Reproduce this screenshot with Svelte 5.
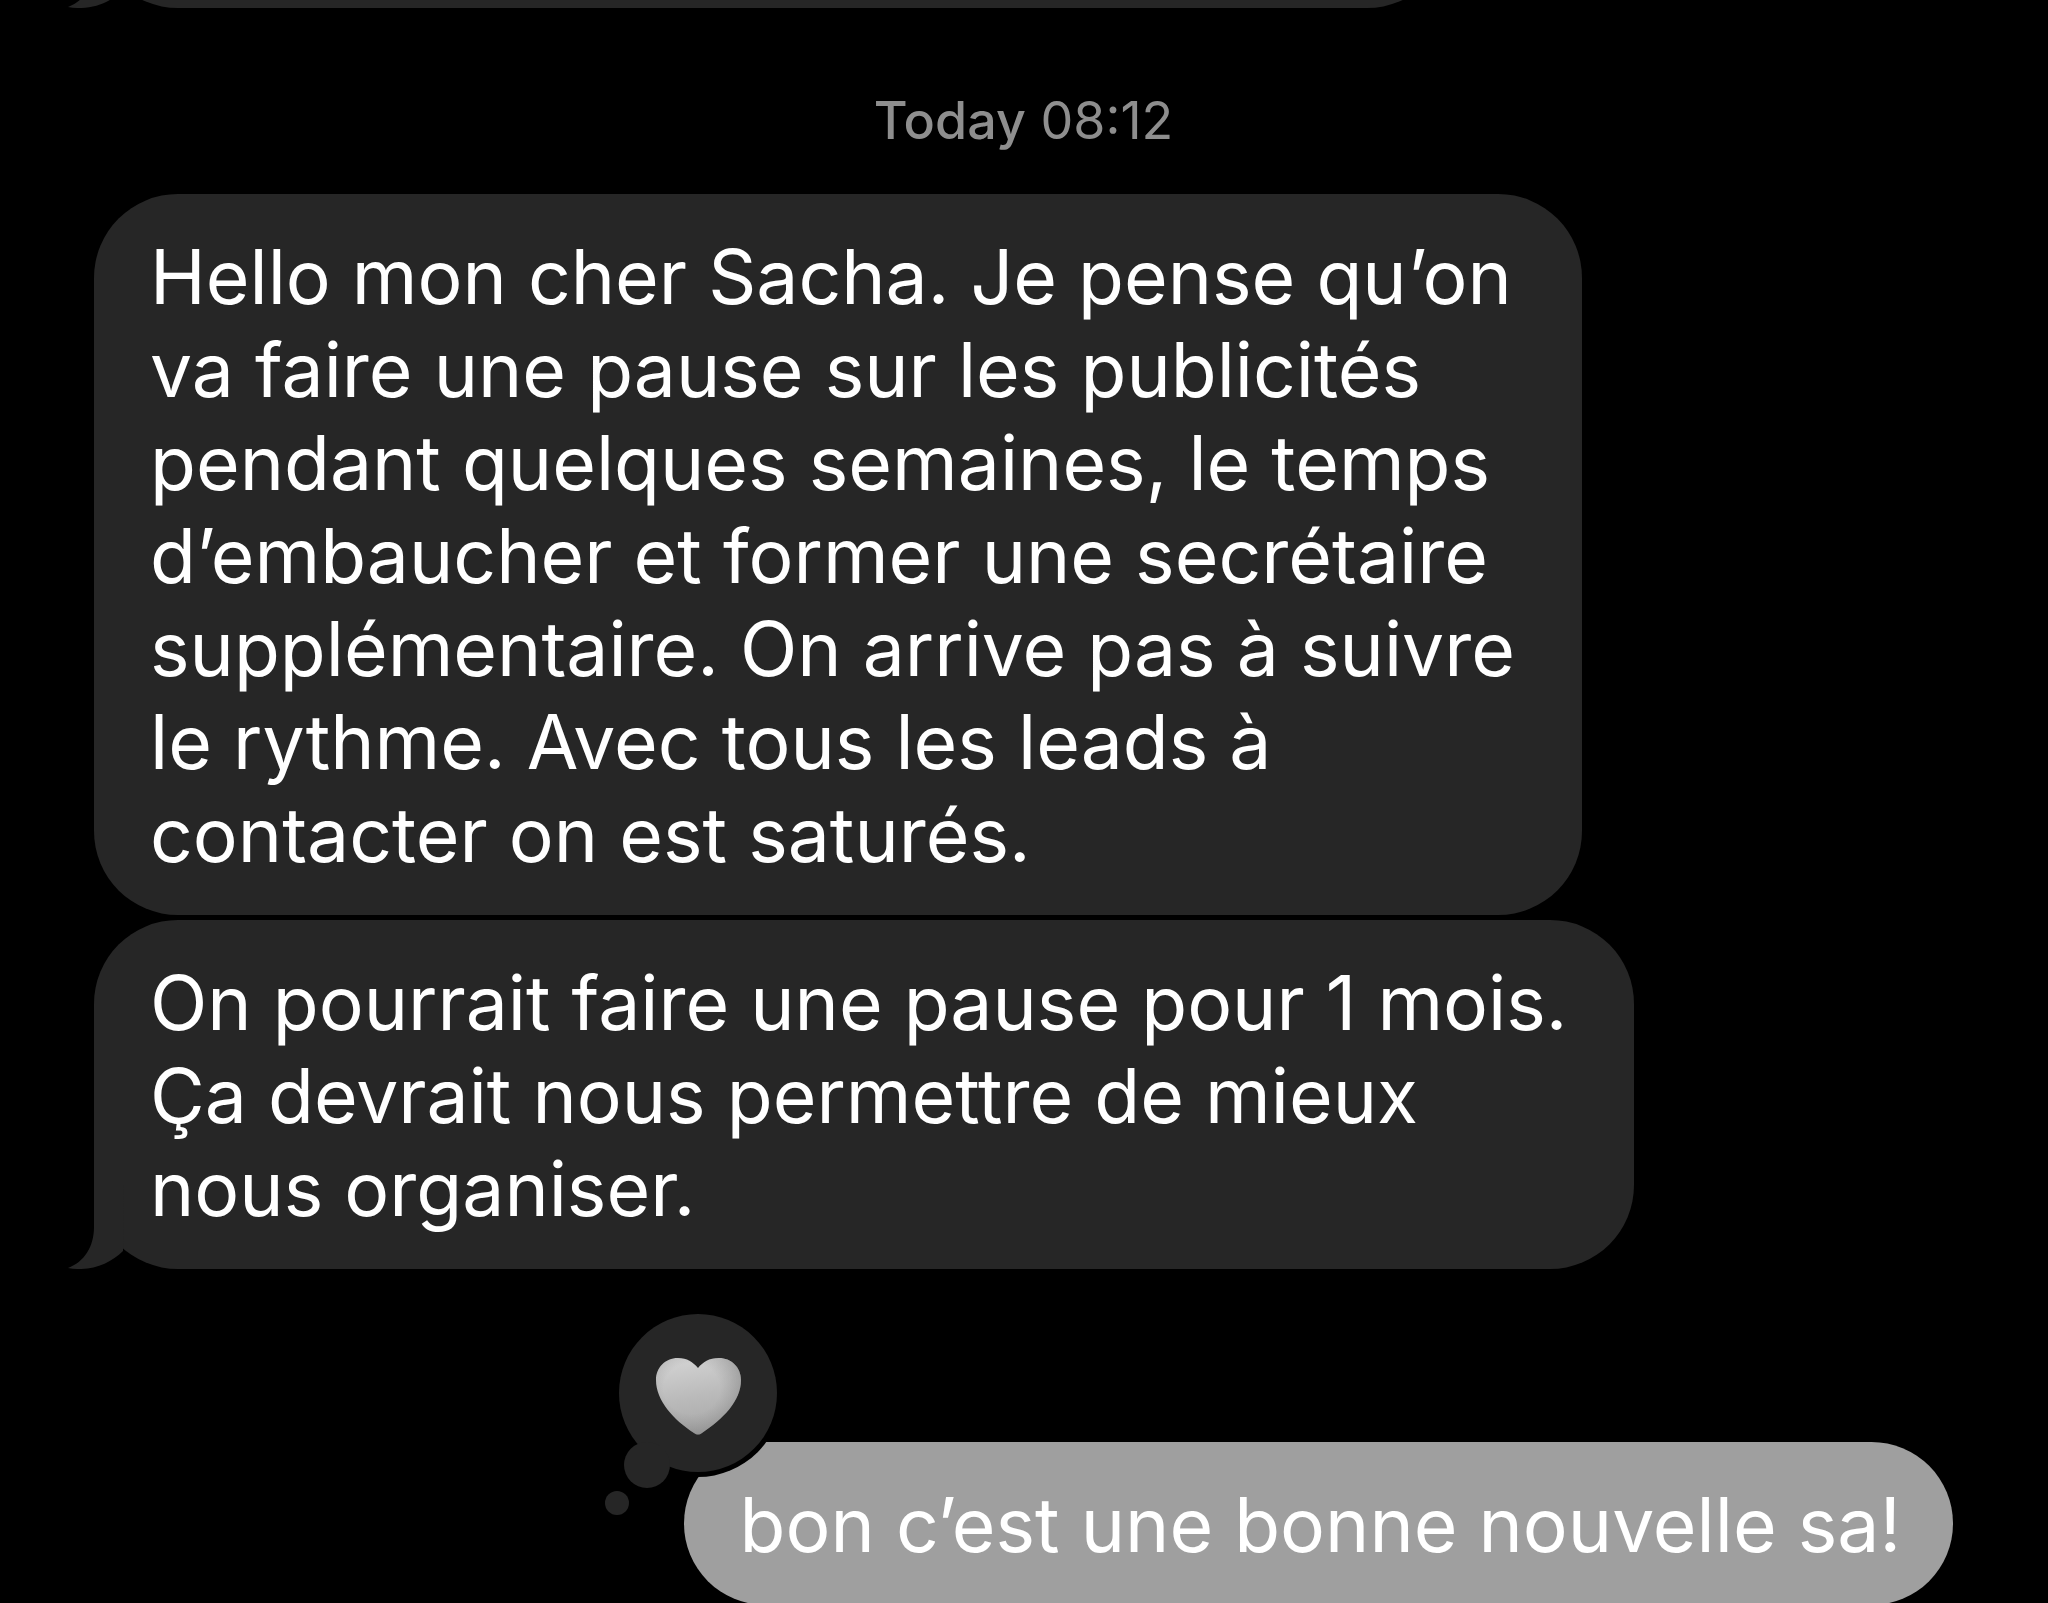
<script lang="ts">
	type Message = {
		id: number;
		text: string;
		sent?: boolean;
		tail?: boolean;
		loved?: boolean;
	};

	let day = $state('Today');
	let time = $state('08:12');

	let messages = $state<Message[]>([
		{
			id: 1,
			text: [
				'Hello mon cher Sacha. Je pense qu’on',
				'va faire une pause sur les publicités',
				'pendant quelques semaines, le temps',
				'd’embaucher et former une secrétaire',
				'supplémentaire. On arrive pas à suivre',
				'le rythme. Avec tous les leads à',
				'contacter on est saturés.'
			].join('\n')
		},
		{
			id: 2,
			text: [
				'On pourrait faire une pause pour 1 mois.',
				'Ça devrait nous permettre de mieux',
				'nous organiser.'
			].join('\n'),
			tail: true
		},
		{ id: 3, text: 'bon c’est une bonne nouvelle sa!', sent: true, loved: true }
	]);
</script>

{#snippet tailShape()}
	<svg class="tail" viewBox="0 0 56 84" aria-hidden="true">
		<path d="M26 0V42C26 62 16 77 0 83C22 87 42 79 55 66L56 0Z" />
	</svg>
{/snippet}

<main class="chat">
	<!-- end of the previous message, scrolled past the top -->
	<div class="bubble previous">
		{@render tailShape()}
	</div>

	<p class="timestamp"><strong>{day}</strong> <time>{time}</time></p>

	{#each messages as message (message.id)}
		<div class="bubble" class:sent={message.sent} class:loved={message.loved}>
			{#if message.tail}
				{@render tailShape()}
			{/if}
			<p>{message.text}</p>
			{#if message.loved}
				<svg class="reaction" viewBox="0 0 182 212" role="img" aria-label="Loved">
					<defs>
						<linearGradient id="heart-fill" x1="0.4" y1="0" x2="0.6" y2="1">
							<stop offset="0" stop-color="#d2d2d2" />
							<stop offset="0.5" stop-color="#bababa" />
							<stop offset="1" stop-color="#a8a8a8" />
						</linearGradient>
						<radialGradient id="heart-shade" cx="0.42" cy="0.4" r="0.66">
							<stop offset="0.5" stop-color="#808080" stop-opacity="0" />
							<stop offset="1" stop-color="#707070" stop-opacity="0.5" />
						</radialGradient>
						<path
							id="heart"
							d="M98 59C93 53 87 49 78 49C65 49 56 59 56 71C56 92 74 111 94 124Q98 127 102 124C123 110 141 92 141 71C141 58 131 49 119 49C109 49 103 53 98 59Z"
						/>
					</defs>
					<circle class="ring" cx="98" cy="84" r="84" />
					<circle cx="98" cy="84" r="79" />
					<circle cx="47" cy="156" r="23" />
					<circle cx="17" cy="194" r="12" />
					<use href="#heart" fill="url(#heart-fill)" />
					<use href="#heart" fill="url(#heart-shade)" />
				</svg>
			{/if}
		</div>
	{/each}
</main>

<style>
	:global(body) {
		margin: 0;
		background: #000;
	}

	.chat {
		box-sizing: border-box;
		display: flex;
		flex-direction: column;
		align-items: flex-start;
		gap: 5px;
		min-height: 100vh;
		padding: 0 95px 0 94px;
		overflow: hidden;
		background: #000;
		color: #fff;
		font-family: Inter, 'Noto Sans', sans-serif;
		font-size: 75px;
		line-height: 93px;
	}

	p {
		margin: 0;
	}

	.bubble {
		position: relative;
		box-sizing: border-box;
		padding: 36px 67px 34px 56px;
		border-radius: 84px;
		background: #262626;
		white-space: pre-line;
	}

	.previous {
		width: 73%;
		height: 168px;
		margin-top: -160px;
	}

	.timestamp {
		align-self: center;
		margin: 78px 0 38px;
		color: #8e8e8e;
		font-size: 52px;
		line-height: 60px;
	}

	.timestamp strong {
		font-weight: 500;
	}

	.sent {
		align-self: flex-end;
		padding-right: 52px;
		background: #9f9f9f;
	}

	.loved {
		margin-top: 168px;
	}

	.tail {
		position: absolute;
		left: -26px;
		bottom: 0;
		width: 56px;
		height: 84px;
		fill: #262626;
	}

	.reaction {
		position: absolute;
		left: -84px;
		top: -133px;
		width: 182px;
		height: 212px;
		fill: #262626;
	}

	.ring {
		fill: #000;
	}
</style>
